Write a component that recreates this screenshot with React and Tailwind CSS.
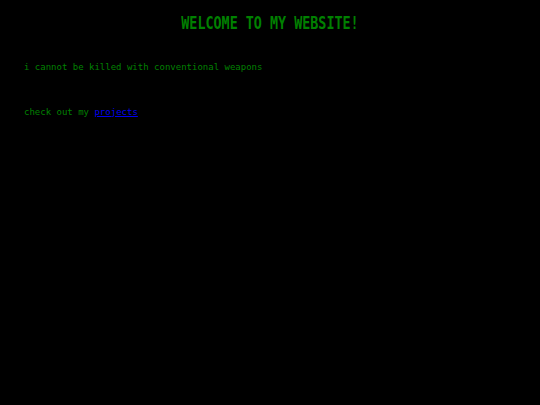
export default function App() {
  return (
    <div className="min-h-[405px] w-full bg-black text-[#008000] font-['DejaVu_Sans_Mono',monospace] px-6 pt-[14px]">
      <h1 className="text-center font-bold text-[13.4px] leading-[20px] [transform:scaleY(1.25)]">WELCOME TO MY WEBSITE!</h1>
      <p className="text-[9px] leading-[12px] mt-[27px]">i cannot be killed with conventional weapons</p>
      <p className="text-[9px] leading-[12px] mt-[33px]">
        check out my <a href="#" className="text-[#0000ee] underline">projects</a>
      </p>
    </div>
  );
}
